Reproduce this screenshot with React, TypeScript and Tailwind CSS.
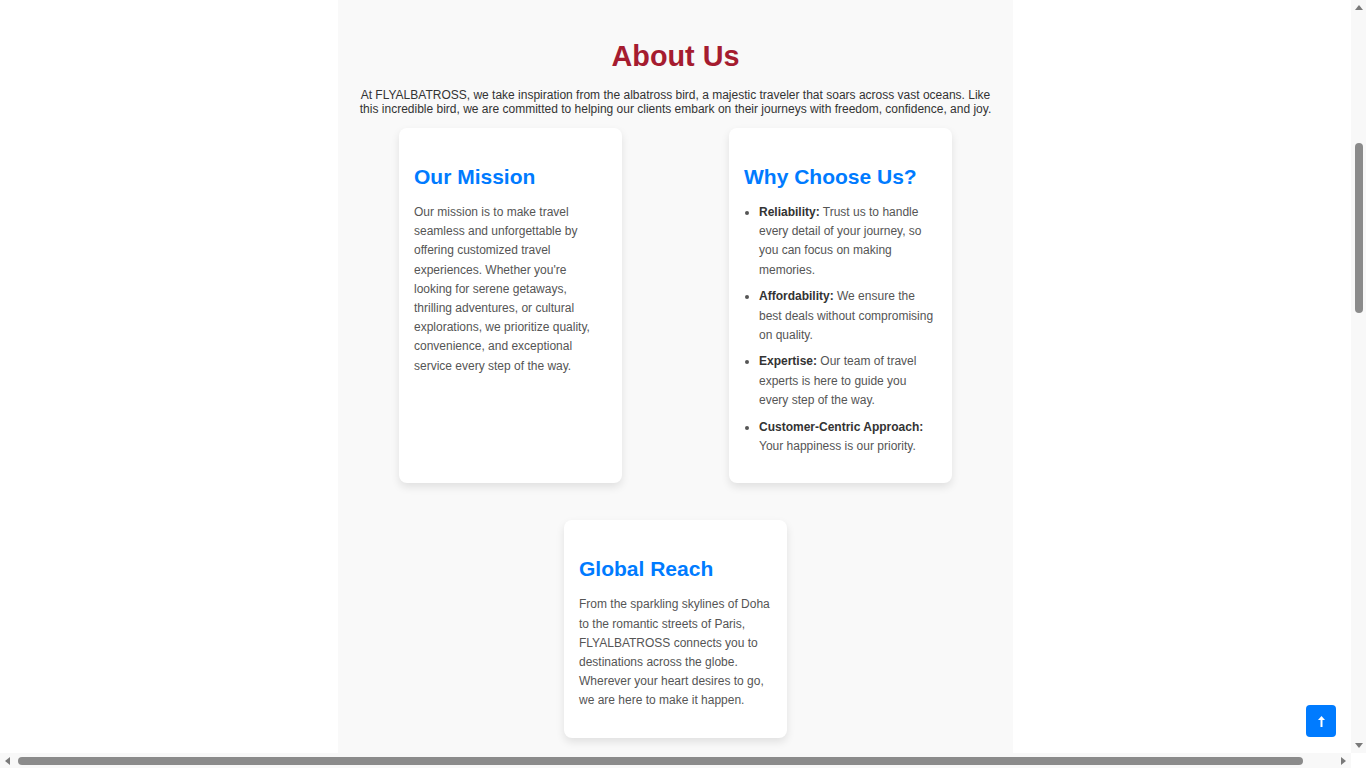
import React from 'react';

const font = { fontFamily: '"Liberation Sans", Arial, sans-serif' };

const Card: React.FC<{ title: string; children: React.ReactNode }> = ({ title, children }) => (
    <div className="w-[223px] bg-white rounded-lg shadow-[0_4px_8px_rgba(0,0,0,0.1)] p-[15px]">
        <h2 className="text-[21px] leading-[24px] font-bold text-[#007bff] mt-[22px] mb-[14px]">{title}</h2>
        {children}
    </div>
);

const Arrow: React.FC<{ dir: 'up' | 'down' | 'left' | 'right' }> = ({ dir }) => {
    const pts = {
        up: '4,1 8,6 0,6',
        down: '0,1 8,1 4,6',
        left: '6,0 6,8 1,4',
        right: '1,0 1,8 6,4',
    }[dir];
    return (
        <svg width="8" height="8" viewBox="0 0 8 8">
            <polygon points={pts} fill="#7a7a7a" />
        </svg>
    );
};

export default function App() {
    return (
        <div className="w-screen h-screen flex flex-col overflow-hidden bg-white" style={font}>
            <div className="flex flex-1 min-h-0">
                <div className="flex-1 relative overflow-hidden">
                    <div className="w-[675px] h-full mx-auto bg-[#f9f9f9] px-5 pt-[40px]">
                        <h1 className="text-[28.8px] leading-[33px] font-bold text-[#a51c30] text-center mb-[15px]">About Us</h1>
                        <p className="text-[12px] leading-[14px] text-[#333] text-center mb-3">
                            At FLYALBATROSS, we take inspiration from the albatross bird, a majestic traveler that soars across vast oceans. Like this incredible bird, we are committed to helping our clients embark on their journeys with freedom, confidence, and joy.
                        </p>
                        <div className="flex flex-wrap justify-center gap-x-[107px] gap-y-[37px]">
                            <Card title="Our Mission">
                                <p className="text-[12px] leading-[19.2px] text-[#555] mb-[12.5px]">
                                    Our mission is to make travel seamless and unforgettable by offering customized travel experiences. Whether you're looking for serene getaways, thrilling adventures, or cultural explorations, we prioritize quality, convenience, and exceptional service every step of the way.
                                </p>
                            </Card>
                            <Card title="Why Choose Us?">
                                <ul className="list-disc pl-[15px] text-[12px] leading-[19.2px] text-[#555] mb-[12.5px] space-y-[7.5px] marker:text-[#555]">
                                    <li><strong className="text-[#333]">Reliability:</strong> Trust us to handle every detail of your journey, so you can focus on making memories.</li>
                                    <li><strong className="text-[#333]">Affordability:</strong> We ensure the best deals without compromising on quality.</li>
                                    <li><strong className="text-[#333]">Expertise:</strong> Our team of travel experts is here to guide you every step of the way.</li>
                                    <li><strong className="text-[#333]">Customer-Centric Approach:</strong> Your happiness is our priority.</li>
                                </ul>
                            </Card>
                            <Card title="Global Reach">
                                <p className="text-[12px] leading-[19.2px] text-[#555] mb-[12.5px]">
                                    From the sparkling skylines of Doha to the romantic streets of Paris, FLYALBATROSS connects you to destinations across the globe. Wherever your heart desires to go, we are here to make it happen.
                                </p>
                            </Card>
                        </div>
                    </div>
                    <button className="absolute right-[15px] bottom-[16px] w-[30px] h-[32px] rounded bg-[#007bff] flex items-center justify-center">
                        <svg width="7" height="11" viewBox="0 0 7 11">
                            <polygon points="3.5,0 7,4 4.5,4 4.5,11 2.5,11 2.5,4 0,4" fill="#fff" />
                        </svg>
                    </button>
                </div>
                <div className="w-[15px] bg-[#f8f8f8] flex flex-col items-center">
                    <div className="h-[15px] flex items-center justify-center"><Arrow dir="up" /></div>
                    <div className="flex-1 w-full flex flex-col items-center pt-[128px]">
                        <div className="w-[8px] h-[170px] rounded-full bg-[#8b8b8b]" />
                    </div>
                    <div className="h-[15px] flex items-center justify-center"><Arrow dir="down" /></div>
                </div>
            </div>
            <div className="h-[15px] flex bg-[#f8f8f8]">
                <div className="flex-1 flex items-center">
                    <div className="w-[15px] flex justify-center"><Arrow dir="left" /></div>
                    <div className="flex-1 flex items-center pl-[3px] pr-[33px]">
                        <div className="w-full h-[8px] rounded-full bg-[#8b8b8b]" />
                    </div>
                    <div className="w-[15px] flex justify-center"><Arrow dir="right" /></div>
                </div>
                <div className="w-[15px] bg-white" />
            </div>
        </div>
    );
}
